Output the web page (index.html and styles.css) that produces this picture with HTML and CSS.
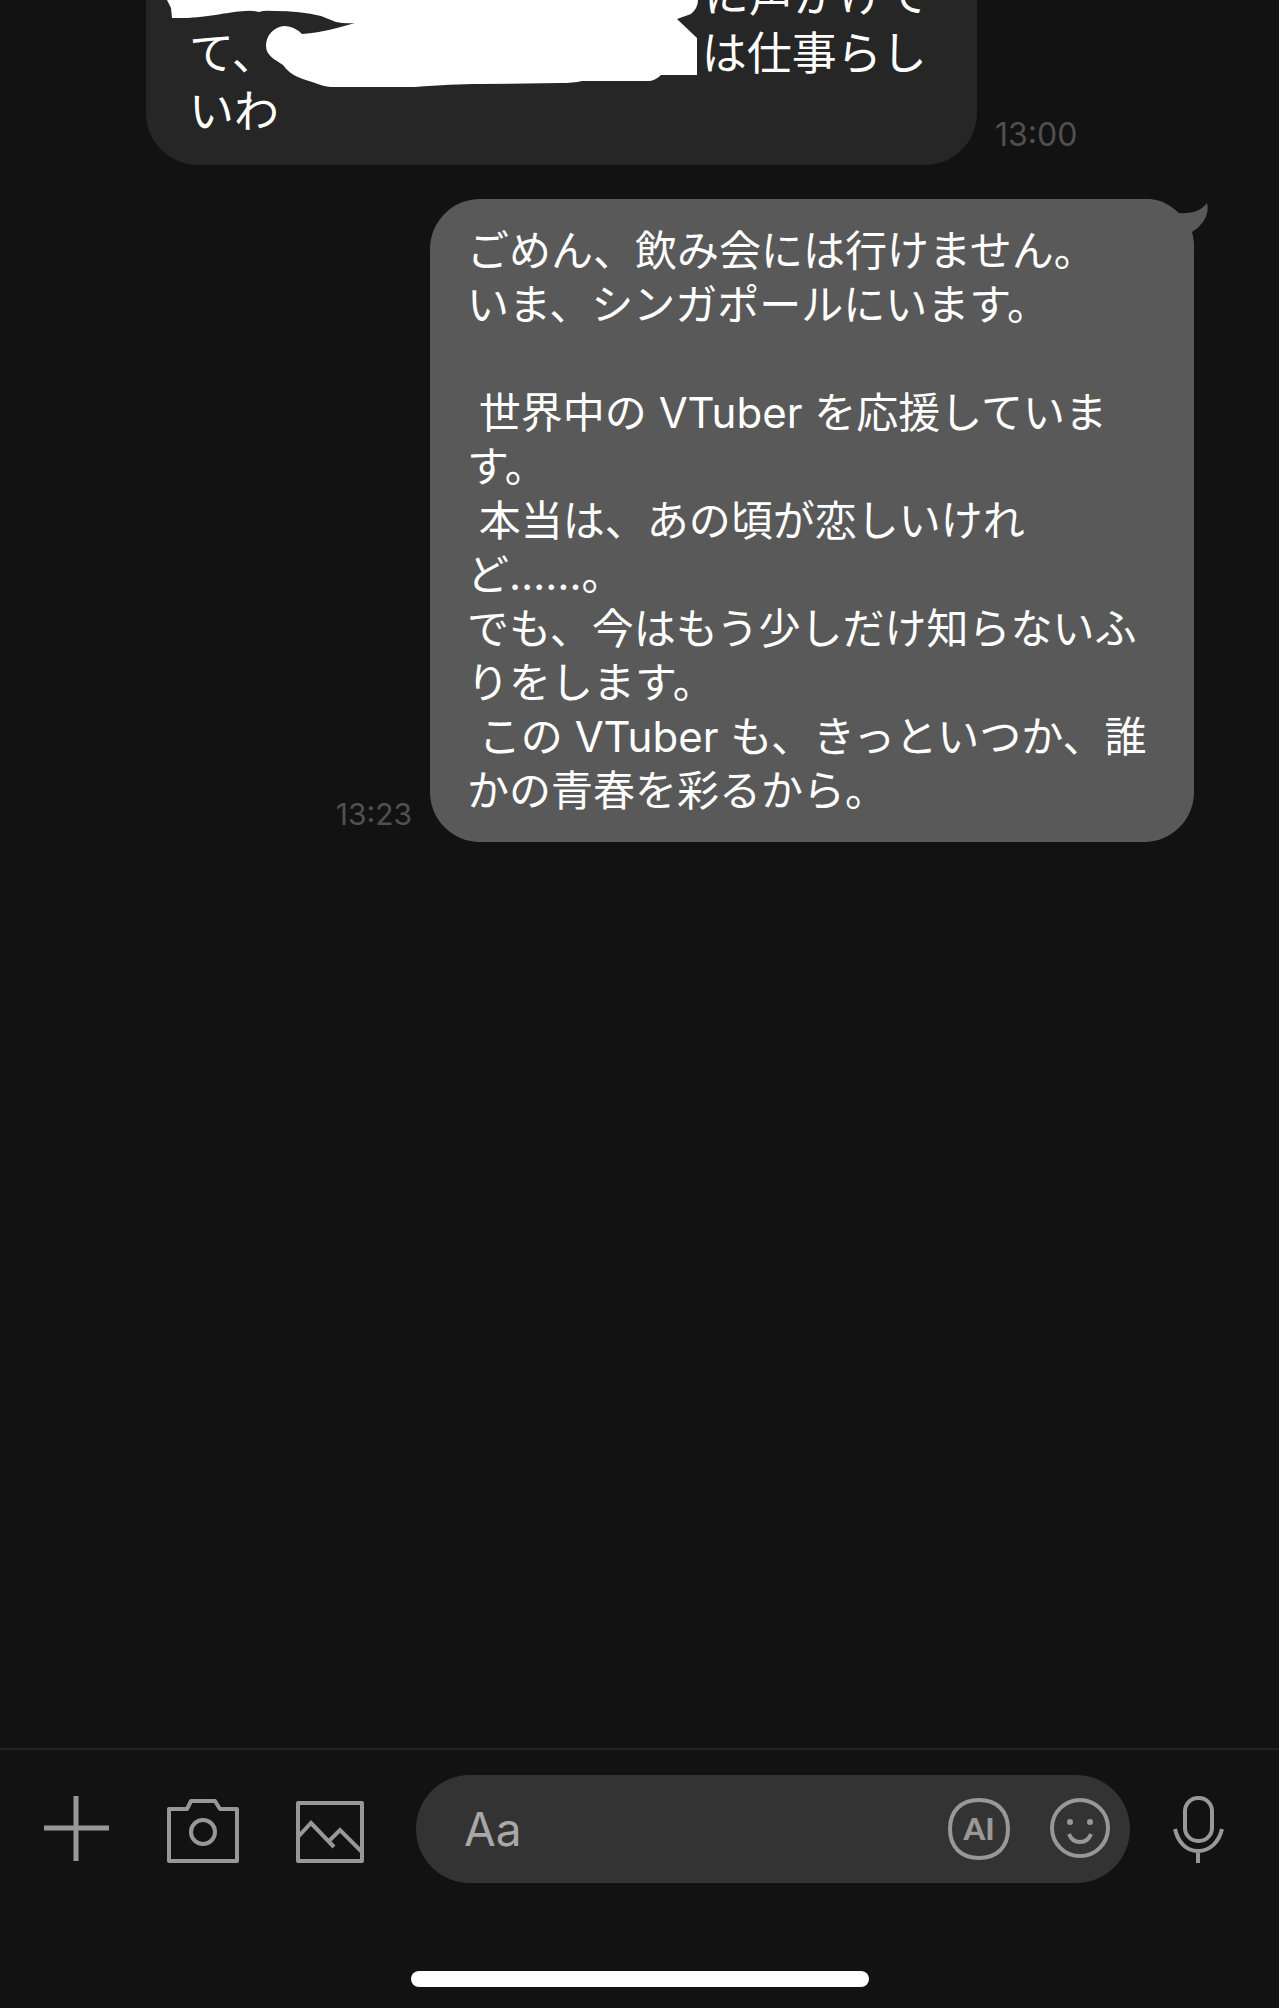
FILE: index.html
```html
<!DOCTYPE html>
<html lang="ja">
<head>
    <meta charset="UTF-8">
    <meta name="viewport" content="width=device-width, initial-scale=1.0">
    <title>トーク</title>
    <link rel="stylesheet" href="styles.css">
</head>
<body>
    <main class="chat">
        <div class="message received">
            <div class="bubble">
                <p><span class="hidden-name long"></span>に声がけて<br>て、<span class="hidden-name"></span>は仕事らし<br>いわ</p>
                <svg class="marker" viewBox="146 0 560 90" aria-hidden="true">
                    <path fill="#fff" d="M167 0L171 8L172 18H188C215 16 228 12 245 11Q253 10 259 12Q264 10 275 11Q300 11 321 16L336 22Q345 24 355 23L337 28Q318 33 302 34Q294 26 284 26C273 27 266 36 266 46C266 56 276 60 283 65C291 77 304 79 315 83Q325 87 332 87H415C440 85 460 84 480 84L560 83Q573 83 582 81H650Q656 80 661 75H697V38L677 19L691 14Q698 8 698 0Z"/>
                </svg>
            </div>
            <time class="time">13:00</time>
        </div>

        <div class="message sent">
            <time class="time">13:23</time>
            <div class="bubble">
                <p>ごめん、飲み会には行けません。<br>いま、シンガポールにいます。<br><br>&nbsp;世界中の VTuber を応援しています。<br>&nbsp;本当は、あの頃が恋しいけれど……。<br>でも、今はもう少しだけ知らないふりをします。<br>&nbsp;この VTuber も、きっといつか、誰かの青春を彩るから。</p>
                <svg class="tail" viewBox="0 0 64 50" aria-hidden="true">
                    <path fill="#595959" d="M0 0H3C20 0 28 9 35 14C48 15 57 12 63 4C66 15 59 26 48 33Q50 40 50 50H0Z"/>
                </svg>
            </div>
        </div>
    </main>

    <form class="composer">
        <button type="button" class="icon-btn" aria-label="メニュー">
            <svg viewBox="40 1793 72 72"><path d="M76 1796V1861M44 1828H109" stroke-width="5"/></svg>
        </button>
        <button type="button" class="icon-btn" aria-label="カメラ">
            <svg viewBox="167 1793 72 72">
                <path d="M169 1809H187L191 1801H215L220 1809H237V1861H169Z"/>
                <circle cx="203" cy="1832" r="12"/>
            </svg>
        </button>
        <button type="button" class="icon-btn" aria-label="写真">
            <svg viewBox="294 1793 72 72">
                <path d="M298 1803H362V1861H298Z"/>
                <path d="M298 1837L311 1823L334 1847M330 1840L340 1830L362 1852" stroke-linejoin="miter"/>
            </svg>
        </button>
        <div class="field">
            <input type="text" class="field-input" placeholder="Aa" aria-label="メッセージを入力">
            <button type="button" class="field-btn" aria-label="AI">
                <svg viewBox="0 0 62 62">
                    <path d="M31 2C49 2 60 13 60 31S49 60 31 60S2 49 2 31S13 2 31 2Z"/>
                    <text class="ai-text" x="31" y="42" text-anchor="middle">AI</text>
                </svg>
            </button>
            <button type="button" class="field-btn" aria-label="スタンプ">
                <svg viewBox="0 0 62 62">
                    <circle cx="31" cy="30" r="28"/>
                    <path d="M20 36Q23 44 31 44T42 36"/>
                    <circle class="eye" cx="21" cy="24" r="3"/>
                    <circle class="eye" cx="41" cy="24" r="3"/>
                </svg>
            </button>
        </div>
        <button type="button" class="icon-btn" aria-label="ボイスメッセージ">
            <svg viewBox="1162 1793 72 72">
                <rect x="1185" y="1798" width="27" height="43" rx="13"/>
                <path d="M1175 1829C1178 1842 1186 1851 1198 1851S1219 1842 1222 1829M1198 1851V1863" stroke-linejoin="miter"/>
            </svg>
        </button>
    </form>
    <div class="home-bar"></div>
</body>
</html>
```
FILE: styles.css
```css
* {
    box-sizing: border-box;
}
body {
    display: flex;
    flex-direction: column;
    min-height: 100vh;
    margin: 0;
    background: #121212;
    color: #fff;
    font-family: Inter, "Noto Sans CJK JP", sans-serif;
}
.chat {
    flex: 1;
    display: flex;
    flex-direction: column;
    gap: 34px;
    overflow: hidden;
}
.message {
    display: flex;
    align-items: flex-end;
}
.message p {
    margin: 0;
}
.bubble {
    position: relative;
}
.time {
    color: #505050;
    line-height: 36px;
}

/* received */
.received {
    gap: 18px;
    margin-top: -33px;
    padding-left: 146px;
}
.received .bubble {
    flex: 0 1 831px;
    padding: 0 0 24px 43px;
    border-radius: 0 0 52px 52px;
    background: #262626;
    font-size: 45px;
    line-height: 58px;
    white-space: nowrap;
}
.received .time {
    padding-bottom: 12px;
    font-size: 32px;
}
.hidden-name {
    display: inline-block;
    width: 425px;
}
.hidden-name.long {
    width: 515px;
}
.marker {
    position: absolute;
    top: 33px;
    left: 0;
    width: 560px;
    height: 90px;
}

/* sent */
.sent {
    justify-content: flex-end;
    gap: 18px;
    padding-right: 85px;
}
.sent .bubble {
    max-width: 764px;
    padding: 25px 40px 24px 37px;
    border-radius: 50px;
    background: #595959;
    font-size: 42px;
    line-height: 54px;
}
.sent .time {
    padding-bottom: 10px;
    font-size: 30px;
}
.tail {
    position: absolute;
    top: 0;
    right: -14px;
    width: 64px;
    height: 50px;
}

/* input bar */
.composer {
    display: flex;
    align-items: center;
    gap: 55px;
    padding: 25px 45px 88px 40px;
    border-top: 2px solid #232323;
}
.composer button {
    flex: none;
    padding: 0;
    border: none;
    background: none;
    cursor: pointer;
}
.composer svg {
    display: block;
    width: 100%;
    height: 100%;
    fill: none;
    stroke: #989898;
    stroke-width: 4;
    stroke-linejoin: round;
}
.icon-btn {
    width: 72px;
    height: 72px;
}
.field {
    flex: 1;
    display: flex;
    align-items: center;
    gap: 39px;
    min-width: 0;
    height: 108px;
    margin: 0 -23px 0 -5px;
    padding: 0 19px 0 48px;
    border-radius: 54px;
    background: #333;
}
.field-input {
    flex: 1;
    width: 100%;
    min-width: 0;
    padding: 0;
    border: none;
    outline: none;
    background: none;
    color: #fff;
    font-family: inherit;
    font-size: 46px;
}
.field-input::placeholder {
    color: #a8a8a8;
    opacity: 1;
}
.composer .field-btn {
    width: 62px;
    height: 62px;
}
.composer .ai-text {
    fill: #989898;
    stroke: none;
    font-family: Lato, sans-serif;
    font-size: 31px;
    font-weight: 900;
}
.composer .eye {
    fill: #989898;
    stroke: none;
}
.home-bar {
    width: 36%;
    max-width: 458px;
    height: 16px;
    margin: 0 auto 21px;
    border-radius: 8px;
    background: #fff;
}
```
